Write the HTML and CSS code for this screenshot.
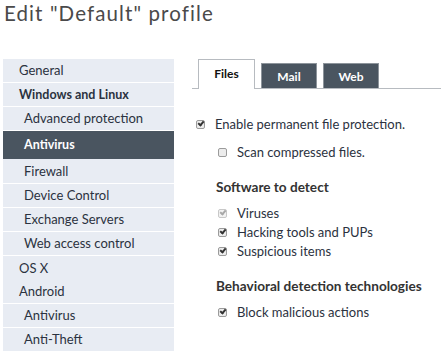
FILE: index.html
```html
<!DOCTYPE html>
<html>
<head>
    <title>Edit profile</title>
    <link rel="stylesheet" href="styles.css">
</head>
<body>
    <h1 class="title">Edit "Default" profile</h1>
    <div class="layout">
        <ul class="side-nav">
            <li class="nav-item">General</li>
            <li class="nav-item group">Windows and Linux</li>
            <li class="nav-item sub">Advanced protection</li>
            <li class="nav-item sub active">Antivirus</li>
            <li class="nav-item sub tall">Firewall</li>
            <li class="nav-item sub">Device Control</li>
            <li class="nav-item sub">Exchange Servers</li>
            <li class="nav-item sub">Web access control</li>
            <li class="nav-item joined">OS X</li>
            <li class="nav-item">Android</li>
            <li class="nav-item sub">Antivirus</li>
            <li class="nav-item sub">Anti-Theft</li>
        </ul>

        <div class="panel">
            <div class="tabs">
                <div class="tab current">Files</div>
                <div class="tab">Mail</div>
                <div class="tab">Web</div>
            </div>

            <div class="form">
                <div class="option main"><span class="box checked"></span>Enable permanent file protection.</div>
                <div class="option sub scan"><span class="box"></span>Scan compressed files.</div>

                <h2 class="section">Software to detect</h2>
                <div class="option sub"><span class="box checked disabled"></span>Viruses</div>
                <div class="option sub"><span class="box checked"></span>Hacking tools and PUPs</div>
                <div class="option sub"><span class="box checked"></span>Suspicious items</div>

                <h2 class="section">Behavioral detection technologies</h2>
                <div class="option sub"><span class="box checked"></span>Block malicious actions</div>
            </div>
        </div>
    </div>
</body>
</html>
```

FILE: styles.css
```css
body {
    margin: 0;
    font-family: Lato, "Open Sans", sans-serif;
    color: #2b3240;
    background: #fff;
}

.title {
    margin: 0;
    padding: 1px 4px 0;
    font-size: 20.5px;
    line-height: 24px;
    font-weight: 400;
    letter-spacing: 1.1px;
    color: #4a4a4a;
}

.layout {
    display: flex;
    align-items: flex-start;
    margin-top: 34px;
}

.side-nav {
    list-style: none;
    margin: 0 0 0 3px;
    padding: 0;
    width: 171px;
}

.nav-item {
    height: 23px;
    line-height: 23px;
    padding-left: 16px;
    font-size: 13px;
    background: #e8ecf3;
    border-bottom: 1px solid #fff;
}

.nav-item.group {
    font-size: 12.5px;
    font-weight: 700;
}

.nav-item.sub {
    padding-left: 21px;
}

.nav-item.tall {
    height: 24px;
    line-height: 25px;
}

.nav-item.joined {
    border-bottom: none;
    height: 24px;
    line-height: 24px;
}

.nav-item.active {
    height: 28px;
    line-height: 27px;
    border-bottom: none;
    background: #4a5560;
    color: #fff;
    font-size: 12.5px;
    font-weight: 700;
}

.panel {
    flex: 1;
    margin-left: 18px;
}

.tabs {
    display: flex;
    align-items: flex-end;
    gap: 5px;
    height: 29px;
    padding-left: 6px;
    border-bottom: 1px solid #b7bbc0;
}

.tab {
    width: 54px;
    height: 24px;
    line-height: 25px;
    text-align: center;
    font-size: 12px;
    font-weight: 700;
    color: #fff;
    background: #4a5560;
    border: 1px solid #8d949b;
    border-bottom: none;
}

.tab.current {
    width: 55px;
    height: 29px;
    line-height: 27px;
    margin-bottom: -1px;
    color: #111;
    background: #fff;
    border-color: #b7bbc0;
}

.tab + .tab {
    margin-left: 1px;
}

.form {
    display: flex;
    flex-direction: column;
    padding-top: 26px;
}

.option {
    display: flex;
    align-items: center;
    height: 18px;
    font-size: 13px;
}

.option.main {
    padding-left: 4px;
}

.option.sub {
    padding-left: 26px;
}

.option.scan {
    margin-top: 10px;
}

.option.sub + .option.sub {
    margin-top: 1px;
}

.box {
    position: relative;
    box-sizing: border-box;
    width: 9px;
    height: 9px;
    margin-right: 10px;
    border: 1px solid #9b9b9b;
    border-radius: 2px;
    background: #ececec;
}

.box.checked::after {
    content: "";
    position: absolute;
    left: 1px;
    top: 0;
    width: 4px;
    height: 2px;
    border-left: 2px solid #333;
    border-bottom: 2px solid #333;
    transform: rotate(-50deg);
}

.box.disabled {
    border-color: #c8c8c8;
    background: #f2f2f2;
}

.box.disabled::after {
    border-color: #a8a8a8;
}

.section {
    margin: 17px 0 8px 24px;
    font-size: 13.6px;
    line-height: 18px;
    font-weight: 700;
    color: #333;
}
```
